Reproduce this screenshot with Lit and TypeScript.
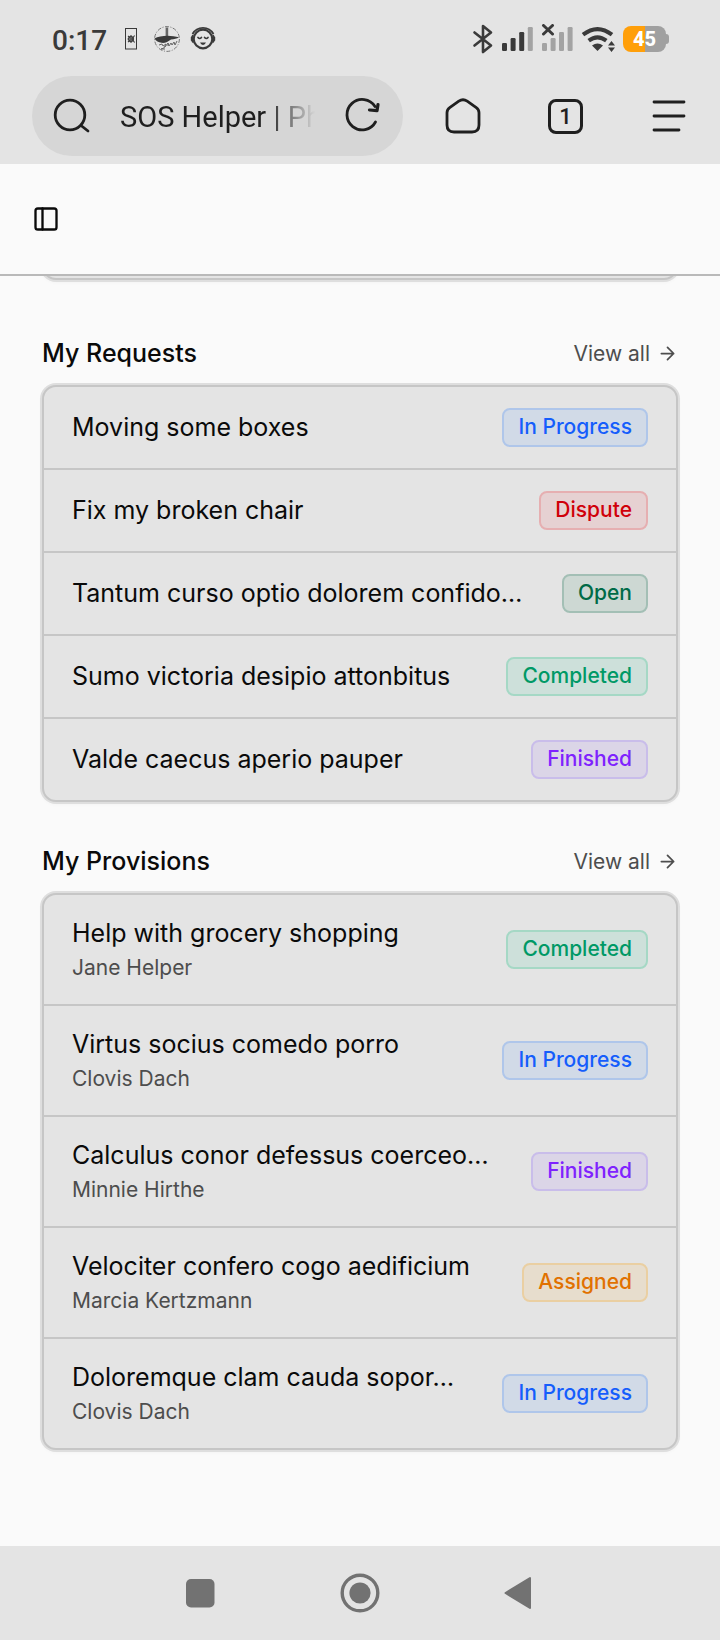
import { LitElement, html, css, svg, nothing } from "lit";
import { customElement, property } from "lit/decorators.js";

type Status = "In Progress" | "Dispute" | "Open" | "Completed" | "Finished" | "Assigned";

interface Item {
  title: string;
  person?: string;
  status: Status;
}

const REQUESTS: Item[] = [
  { title: "Moving some boxes", status: "In Progress" },
  { title: "Fix my broken chair", status: "Dispute" },
  { title: "Tantum curso optio dolorem confido…", status: "Open" },
  { title: "Sumo victoria desipio attonbitus", status: "Completed" },
  { title: "Valde caecus aperio pauper", status: "Finished" },
];

const PROVISIONS: Item[] = [
  { title: "Help with grocery shopping", person: "Jane Helper", status: "Completed" },
  { title: "Virtus socius comedo porro", person: "Clovis Dach", status: "In Progress" },
  { title: "Calculus conor defessus coerceo…", person: "Minnie Hirthe", status: "Finished" },
  { title: "Velociter confero cogo aedificium", person: "Marcia Kertzmann", status: "Assigned" },
  { title: "Doloremque clam cauda sopor…", person: "Clovis Dach", status: "In Progress" },
];

@customElement("status-bar")
export class StatusBar extends LitElement {
  static styles = css`
    :host {
      display: flex;
      align-items: center;
      justify-content: space-between;
      height: 74px;
      padding: 2px 51px 0 52px;
      color: #3a3a3a;
      font-family: Roboto, sans-serif;
    }
    .group {
      display: flex;
      align-items: center;
      gap: 8px;
    }
    .group.system {
      gap: 7px;
    }
    .time {
      font-size: 28px;
      line-height: 32px;
      font-weight: 500;
      padding-top: 4px;
      margin-right: 2px;
    }
    svg {
      display: block;
    }
    .battery {
      display: flex;
      align-items: center;
    }
    .cell {
      width: 43px;
      height: 26px;
      border-radius: 8px;
      background: linear-gradient(to right, #ff9f0a 50%, #a0a0a0 50%);
      color: #fff;
      font-size: 20px;
      line-height: 27px;
      font-weight: 800;
      text-align: center;
    }
    .nub {
      width: 3px;
      height: 10px;
      border-radius: 0 3px 3px 0;
      background: #a0a0a0;
    }
  `;

  render() {
    return html`
      <div class="group">
        <span class="time">0:17</span>
        <svg width="28" height="28" viewBox="0 0 28 28" aria-hidden="true">
          <rect x="8.5" y="3.5" width="11" height="20.5" fill="none" stroke="#3a3a3a" stroke-width="1" />
          <circle cx="14" cy="14" r="2.4" fill="none" stroke="#3a3a3a" stroke-width="1.2" />
          <path d="M14 10v8M10.5 14H14M11 11l2 1.5M11 17l2-1.5M17.6 10.5L15 14l2.6 3.5" fill="none" stroke="#3a3a3a" stroke-width="1.1" />
        </svg>
        <svg width="28" height="28" viewBox="0 0 28 28" aria-hidden="true">
          <circle cx="14" cy="14" r="12.4" fill="none" stroke="#777" stroke-width="1" stroke-dasharray="4 1.5 1 1.5" />
          <path d="M12.6 2.5h2.6v9h-2.6z" fill="#666" />
          <path d="M1.5 13.5c3-1.8 8-2.700 13-2.800 4 .1 8 .9 11.500 1.600-2 1.700-5 1.700-8 2.200-3 2.200-6 3.800-9.500 3.300C5.500 17.500 3 16 1.500 13.500z" fill="#3a3a3a" />
          <path d="M6 20l3-1 1 2 3-2-2 4-3 1M12 22l3-4 1 3 2-3 1 2 2-3 1 3 2-4M8 24h4M15 21v-3" fill="none" stroke="#666" stroke-width="1" />
        </svg>
        <svg width="28" height="28" viewBox="0 0 28 28" aria-hidden="true">
          <circle cx="14" cy="14" r="9.300" fill="none" stroke="#3a3a3a" stroke-width="2.200" />
          <path d="M3.500 9A12 12 0 0 1 24.500 9" fill="none" stroke="#3a3a3a" stroke-width="1.800" />
          <path d="M4.500 9.500v8.500C2.800 18 2.800 16 1.800 15.500v-3.500C2.800 11.500 2.800 9.500 4.500 9.500zM23.500 9.500v8.500c1.700 0 1.700-2 2.700-2.500v-3.500c-1-.5-1-2.500-2.700-2.500z" fill="#3a3a3a" />
          <path d="M9 12.500q1.700 2 3.400 0M15.600 12.500q1.700 2 3.400 0" fill="none" stroke="#3a3a3a" stroke-width="1.700" stroke-linecap="round" />
          <path d="M11 17.500h6q-1 2.400-3 2.400t-3-2.400z" fill="#3a3a3a" />
        </svg>
      </div>
      <div class="group system">
        <svg width="24" height="30" viewBox="0 0 24 30" aria-label="Bluetooth">
          <path d="M3.500 8.500L20 21.500 12 28V2l8 6.500L3.500 21.500" fill="none" stroke="#3a3a3a" stroke-width="2.600" stroke-linejoin="round" stroke-linecap="round" />
        </svg>
        <svg width="32" height="30" viewBox="0 0 32 30" aria-label="Signal">
          <g fill="#3a3a3a">
            <rect x="0" y="19" width="5" height="8" rx="1.200" />
            <rect x="8.600" y="14" width="5" height="13" rx="1.200" />
            <rect x="17.200" y="8" width="5" height="19" rx="1.200" />
          </g>
          <rect x="25.800" y="3" width="5" height="24" rx="1.200" fill="#a3a3a3" />
        </svg>
        <svg width="32" height="30" viewBox="0 0 32 30" aria-label="No signal">
          <g fill="#a3a3a3">
            <rect x="1" y="19" width="5" height="8" rx="1.200" />
            <rect x="9.600" y="14" width="5" height="13" rx="1.200" />
            <rect x="18" y="8" width="5" height="19" rx="1.200" />
            <rect x="26.600" y="3" width="5" height="24" rx="1.200" />
          </g>
          <path d="M2.500 1.500l9 8.500M11.500 1.500l-9 8.500" stroke="#3a3a3a" stroke-width="3" stroke-linecap="round" />
        </svg>
        <svg width="36" height="30" viewBox="0 0 36 30" aria-label="Wi-Fi">
          <g fill="none" stroke="#3a3a3a" stroke-width="4">
            <path d="M3 10.700Q17.500-0.500 32 10.700" />
            <path d="M8.700 16.700Q17.500 10 26.300 16.700" />
          </g>
          <path d="M12 21.500q5.500-4 11 0L17.500 27z" fill="#3a3a3a" />
          <path d="M31.500 17l3.500 4.500h-7zM31.500 28l3.500-4.500h-7z" fill="#3a3a3a" />
        </svg>
        <div class="battery">
          <div class="cell">45</div>
          <div class="nub"></div>
        </div>
      </div>
    `;
  }
}

@customElement("browser-bar")
export class BrowserBar extends LitElement {
  static styles = css`
    :host {
      display: flex;
      align-items: center;
      gap: 8px;
      padding: 0 0 8px 32px;
      font-family: Roboto, sans-serif;
      color: #1f1f1f;
    }
    .pill {
      flex: 1;
      min-width: 0;
      height: 80px;
      box-sizing: border-box;
      padding: 0 20px 0 18px;
      border-radius: 40px;
      background: #d6d6d6;
      display: flex;
      align-items: center;
    }
    .address {
      flex: 1;
      min-width: 0;
      margin: 0 28px 0 30px;
      padding: 2px 0 0;
      border: 0;
      background: none;
      outline: none;
      font: 400 29px / 40px Roboto, sans-serif;
      color: #1f1f1f;
      -webkit-mask-image: linear-gradient(to right, #000 75%, transparent 100%);
      mask-image: linear-gradient(to right, #000 75%, transparent 100%);
    }
    button {
      display: grid;
      place-items: center;
      padding: 0;
      border: 0;
      background: none;
      color: inherit;
      font: inherit;
    }
    .tools {
      display: flex;
    }
    .tool {
      width: 103px;
      height: 80px;
    }
    .tabs {
      width: 29px;
      height: 29px;
      border: 3px solid #1f1f1f;
      border-radius: 8px;
      font-size: 22px;
      line-height: 30px;
      font-weight: 500;
      text-align: center;
    }
    svg {
      display: block;
      fill: none;
      stroke: #1f1f1f;
      stroke-width: 2.800;
      stroke-linecap: round;
      stroke-linejoin: round;
    }
  `;

  render() {
    return html`
      <div class="pill">
        <svg width="40" height="40" viewBox="0 0 40 40" aria-hidden="true">
          <circle cx="20" cy="19" r="14.800" />
          <path d="M31 29.500l7 5.500" />
        </svg>
        <input class="address" type="text" aria-label="Address" .value=${"SOS Helper | Ph"} />
        <button aria-label="Reload">
          <svg width="40" height="40" viewBox="0 0 40 40">
            <path d="M32 10.500A15.200 15.200 0 1 0 32.500 26" />
            <path d="M26.500 14l7.500.7 1-6.200" stroke-width="3.200" />
          </svg>
        </button>
      </div>
      <nav class="tools">
        <button class="tool" aria-label="Home">
          <svg width="40" height="40" viewBox="0 0 40 40">
            <path d="M15.800 5.200q4.200-2.900 8.400 0L33.300 11.600q2.700 1.900 2.700 5.200V29q0 7-7 7H11q-7 0-7-7V16.800q0-3.300 2.700-5.200z" />
          </svg>
        </button>
        <button class="tool" aria-label="Tabs"><span class="tabs">1</span></button>
        <button class="tool" aria-label="Menu">
          <svg width="40" height="40" viewBox="0 0 40 40">
            <path d="M5 6h30M5 20h30M5 34h25" />
          </svg>
        </button>
      </nav>
    `;
  }
}

@customElement("item-list")
export class ItemList extends LitElement {
  static styles = css`
    :host {
      display: block;
    }
    .head {
      display: flex;
      align-items: center;
      justify-content: space-between;
      margin-bottom: 14px;
    }
    h2 {
      margin: 0;
      font-size: 25px;
      line-height: 35px;
      font-weight: 500;
    }
    .all {
      display: flex;
      align-items: center;
      gap: 7px;
      font-size: 21px;
      line-height: 28px;
      color: #4d4d4d;
      text-decoration: none;
    }
    .all svg {
      display: block;
    }
    ul {
      list-style: none;
      margin: 0;
      padding: 0;
      border: 2px solid #c6c6c6;
      border-radius: 14px;
      background: #e4e4e4;
      box-shadow: 0 0 0 2px #dedede, 0 2px 4px rgba(0, 0, 0, 0.04);
    }
    li + li {
      border-top: 2px solid #c6c6c6;
    }
    .row {
      display: flex;
      align-items: center;
      justify-content: space-between;
      gap: 28px;
      padding: 21px 28px;
      color: inherit;
      text-decoration: none;
    }
    .info {
      display: grid;
      gap: 2px;
      min-width: 0;
    }
    .title {
      font-size: 25px;
      line-height: 35px;
      font-weight: 400;
      white-space: nowrap;
      overflow: hidden;
      text-overflow: ellipsis;
    }
    .person {
      font-size: 21px;
      line-height: 30px;
      color: #4d4d4d;
    }
    .badge {
      flex: none;
      padding: 3px 14px 4px;
      border: 2px solid;
      border-radius: 8px;
      font-size: 21px;
      line-height: 28px;
      font-weight: 500;
    }
    .in-progress {
      color: #155dfc;
      background: #d1dae7;
      border-color: #afc6ea;
    }
    .dispute {
      color: #d0000a;
      background: #e6d1d2;
      border-color: #e6afb1;
    }
    .open {
      color: #006b47;
      background: #cdd8d3;
      border-color: #a3bfb5;
    }
    .completed {
      color: #009966;
      background: #cde0da;
      border-color: #a5d8c5;
    }
    .finished {
      color: #7f22fe;
      background: #dbd5e7;
      border-color: #c9bdea;
    }
    .assigned {
      color: #e17100;
      background: #e7ddcd;
      border-color: #eacfa2;
    }
  `;

  @property() heading = "";
  @property({ attribute: false }) items: Item[] = [];

  private badgeClass(status: Status) {
    return "badge " + status.toLowerCase().replace(" ", "-");
  }

  render() {
    return html`
      <div class="head">
        <h2>${this.heading}</h2>
        <a class="all" href="#all">
          View all
          <svg width="21" height="21" viewBox="0 0 24 24" fill="none" stroke="currentColor" stroke-width="2" stroke-linecap="round" stroke-linejoin="round" aria-hidden="true">
            ${svg`<path d="M5 12h14M12 5l7 7-7 7" />`}
          </svg>
        </a>
      </div>
      <ul>
        ${this.items.map(
          (item) => html`
            <li>
              <a class="row" href="#item">
                <span class="info">
                  <span class="title">${item.title}</span>
                  ${item.person ? html`<span class="person">${item.person}</span>` : nothing}
                </span>
                <span class=${this.badgeClass(item.status)}>${item.status}</span>
              </a>
            </li>
          `
        )}
      </ul>
    `;
  }
}

@customElement("app-root")
export class AppRoot extends LitElement {
  static styles = css`
    :host {
      display: flex;
      flex-direction: column;
      min-height: 100vh;
      background: #fafafa;
      color: #0a0a0a;
      font-family: Inter, sans-serif;
    }
    .chrome {
      background: #e4e4e4;
    }
    .header {
      display: flex;
      align-items: center;
      height: 110px;
      padding: 0 32px;
      border-bottom: 2px solid #b9b9b9;
    }
    button {
      display: grid;
      place-items: center;
      padding: 0;
      border: 0;
      background: none;
      color: inherit;
    }
    svg {
      display: block;
    }
    .content {
      flex: 1;
      overflow: hidden;
      padding: 0 42px 42px;
    }
    .previous {
      height: 32px;
      margin: -32px 0 56px;
      border: 2px solid #c6c6c6;
      border-radius: 14px;
      background: #e4e4e4;
      box-shadow: 0 0 0 2px #dedede, 0 2px 4px rgba(0, 0, 0, 0.04);
    }
    .lists {
      display: grid;
      gap: 42px;
    }
    .nav {
      display: flex;
      justify-content: center;
      background: #e4e4e4;
    }
    .nav button {
      width: 160px;
      height: 94px;
    }
  `;

  render() {
    return html`
      <div class="chrome">
        <status-bar></status-bar>
        <browser-bar></browser-bar>
      </div>
      <header class="header">
        <button aria-label="Toggle sidebar">
          <svg width="28" height="28" viewBox="0 0 24 24" fill="none" stroke="currentColor" stroke-width="2" stroke-linecap="round" stroke-linejoin="round">
            <rect x="3" y="3" width="18" height="18" rx="2" />
            <path d="M9 3v18" />
          </svg>
        </button>
      </header>
      <main class="content">
        <div class="previous"></div>
        <div class="lists">
          <item-list heading="My Requests" .items=${REQUESTS}></item-list>
          <item-list heading="My Provisions" .items=${PROVISIONS}></item-list>
        </div>
      </main>
      <nav class="nav">
        <button aria-label="Recent apps">
          <svg width="40" height="40" viewBox="0 0 40 40"><rect x="6" y="6" width="28.500" height="28.500" rx="5" fill="#727272" /></svg>
        </button>
        <button aria-label="Home screen">
          <svg width="40" height="40" viewBox="0 0 40 40">
            <circle cx="20" cy="20" r="17.800" fill="none" stroke="#727272" stroke-width="3.400" />
            <circle cx="20" cy="20" r="10.600" fill="#727272" />
          </svg>
        </button>
        <button aria-label="Back">
          <svg width="40" height="40" viewBox="0 0 40 40">
            <path d="M5.500 20L30 5v30z" fill="#727272" stroke="#727272" stroke-width="2" stroke-linejoin="round" />
          </svg>
        </button>
      </nav>
    `;
  }
}
